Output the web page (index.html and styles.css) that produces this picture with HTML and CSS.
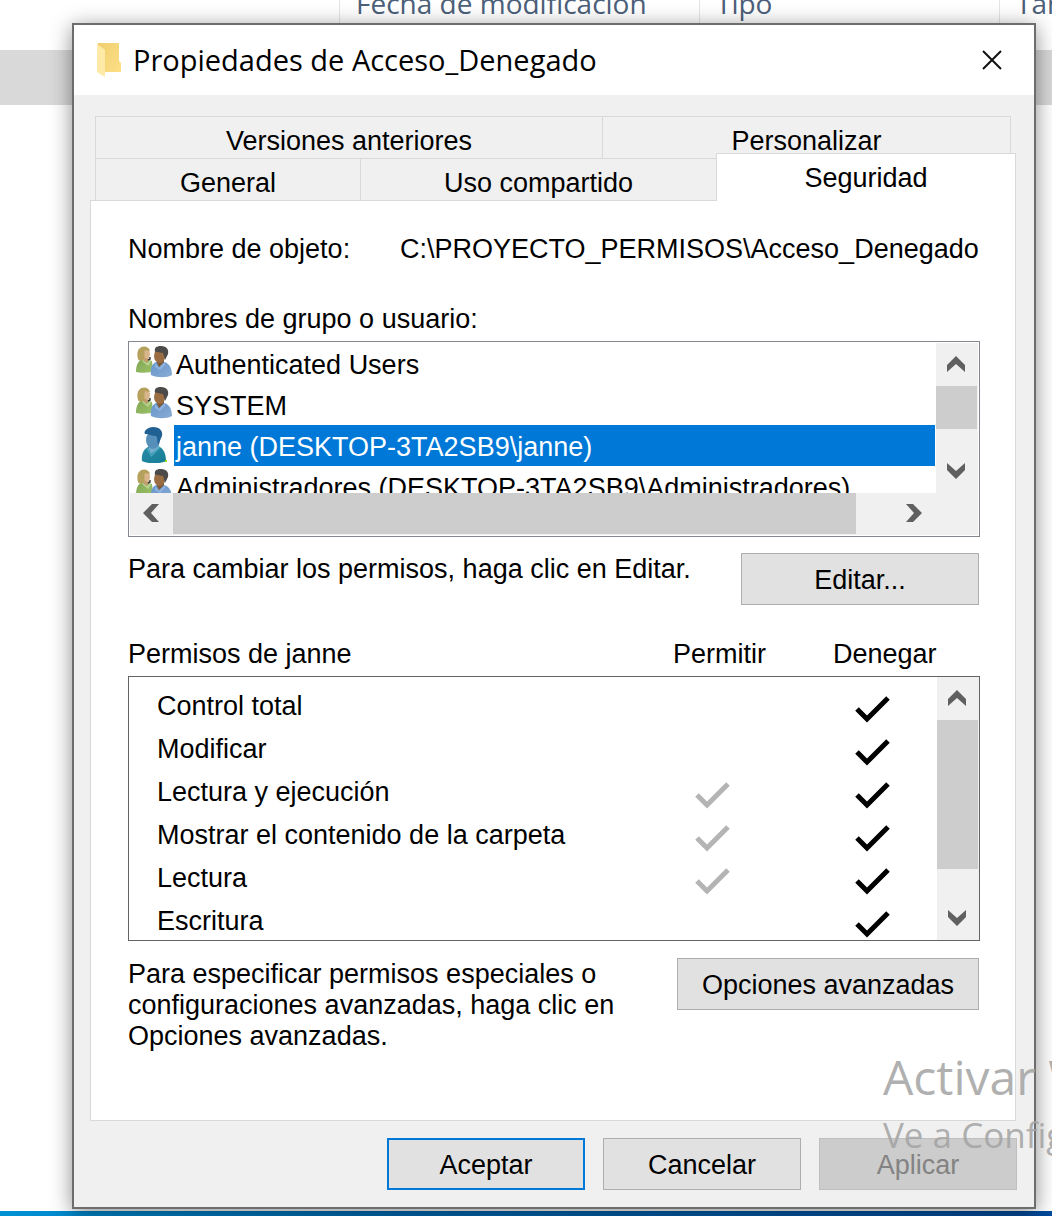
FILE: index.html
```html
<!DOCTYPE html>
<html lang="es">
<head>
<meta charset="utf-8">
<meta name="viewport" content="width=device-width, initial-scale=1">
<title>Propiedades de Acceso_Denegado</title>
<link rel="stylesheet" href="styles.css">
</head>
<body>
<svg width="0" height="0" class="sprites" aria-hidden="true">
  <defs>
    <linearGradient id="green" x1="0" y1="0" x2="1" y2="1"><stop offset="0" stop-color="#7fa452"/><stop offset="1" stop-color="#9cc46a"/></linearGradient>
    <linearGradient id="blue" x1="0" y1="0" x2="1" y2="1"><stop offset="0" stop-color="#6695cb"/><stop offset="1" stop-color="#8aacd4"/></linearGradient>
    <linearGradient id="teal" x1="0" y1="0" x2="1" y2="1"><stop offset="0" stop-color="#2a8ba8"/><stop offset="1" stop-color="#167d95"/></linearGradient>
    <linearGradient id="gold" x1="0" y1="0" x2="1" y2="1"><stop offset="0" stop-color="#efcf70"/><stop offset="1" stop-color="#fddf85"/></linearGradient>
    <symbol id="group" viewBox="0 0 37 32">
      <path d="M1 26C1 20 3 15 6 14c2-1 3-1 4-1l7 2 1 9-2 2c-5 1-11 1-15 0z" fill="url(#green)"/>
      <path d="M7 13l5 4 3-3 1 2-3 4-5-4z" fill="#b9d08f"/>
      <ellipse cx="11" cy="8" rx="4" ry="5.500" fill="#d9b58c"/>
      <path d="M8 11l5 2-1 4-4-3z" fill="#c39b6c"/>
      <path d="M3 13C2 10 2 5 4 3c3-4 10-3 11 2-2 0-4-1-5-1-1 2 0 6-1 9-2 2-5 2-6 0z" fill="#b5a05c"/>
      <path d="M15 11v2l-2 1" fill="none" stroke="#333" stroke-width="1.400"/>
      <path d="M16 29c-1-7 1-11 5-13h8c5 1 8 6 8 13-5 3-15 3-21 0z" fill="url(#blue)"/>
      <path d="M20 17l4 5 6-6v3l-5 5-5-3z" fill="#8fb4e0"/>
      <path d="M22 13h7v3l-5 5-2-4z" fill="#805833"/>
      <ellipse cx="24.500" cy="10" rx="5.500" ry="7" fill="#9a6d42"/>
      <path d="M20 6c-1-4 1-6 6-6 6 0 8 4 7 8l-3 6c-1-3-1-5-2-7-3 0-5-2-8-1z" fill="#4c4b4a"/>
    </symbol>
    <symbol id="person" viewBox="0 0 26 36">
      <path d="M1 34c-1-7 2-12 6-14l10-1c5 2 8 7 8 15-6 3-18 3-24 0z" fill="url(#teal)"/>
      <path d="M7 20l3 8 8-9 1 2-9 9-4-8z" fill="#4aa9c0"/>
      <path d="M8 17h10v3l-8 7-2-5z" fill="#76aed0"/>
      <ellipse cx="12" cy="13" rx="7" ry="9" fill="#5690ba"/>
      <path d="M4 7C2 4 7 0 12 0c7 0 10 4 9 9l-4 9c-1-3 0-7-2-9-4 0-7-2-11-2z" fill="#216093"/>
      <path d="M24 33h2v2h-2z" fill="#8ee000"/>
    </symbol>
    <symbol id="tick" viewBox="0 0 36 28"><path d="M2 14l10 10L33 3" fill="none" stroke="currentColor" stroke-width="5"/></symbol>
    <symbol id="chevron" viewBox="0 0 18 16"><path d="M9 0l9 9v7l-9-8-9 8V9z" fill="#606060"/></symbol>
  </defs>
</svg>

<div class="desktop">
  <div class="explorer">
    <div class="explorer-head">
      <span class="col-name"></span>
      <span class="col-date">Fecha de modificación</span>
      <span class="col-type">Tipo</span>
      <span class="col-size">Tamaño</span>
    </div>
    <div class="explorer-row"></div>
  </div>

  <main class="dialog" role="dialog" aria-labelledby="dialog-title">
    <header class="titlebar">
      <svg class="folder" viewBox="0 0 24 34" aria-hidden="true">
        <path d="M1 0h21v18l2 2v9H1z" fill="url(#gold)"/>
        <path d="M0 1l8 6v27l-8-5z" fill="#ffe9a6"/>
      </svg>
      <h1 id="dialog-title">Propiedades de Acceso_Denegado</h1>
      <button class="close" aria-label="Cerrar">
        <svg viewBox="0 0 20 20"><path d="M1 1l18 18M19 1L1 19" stroke="#111" stroke-width="2"/></svg>
      </button>
    </header>

    <div class="tabs" role="tablist">
      <div class="tab-row tab-row-back">
        <button class="tab tab-versions" role="tab">Versiones anteriores</button>
        <button class="tab tab-custom" role="tab">Personalizar</button>
      </div>
      <div class="tab-row tab-row-front">
        <button class="tab tab-general" role="tab">General</button>
        <button class="tab tab-share" role="tab">Uso compartido</button>
        <button class="tab tab-active" role="tab" aria-selected="true">Seguridad</button>
      </div>
    </div>

    <section class="panel">
      <div class="object-row">
        <label for="object-name">Nombre de objeto:</label>
        <input id="object-name" type="text" readonly value="C:\PROYECTO_PERMISOS\Acceso_Denegado">
      </div>

      <p class="list-label" id="users-label">Nombres de grupo o usuario:</p>
      <div class="user-box">
        <ul class="users" role="listbox" aria-labelledby="users-label">
          <li role="option"><svg class="group"><use href="#group"/></svg><span>Authenticated Users</span></li>
          <li role="option"><svg class="group"><use href="#group"/></svg><span>SYSTEM</span></li>
          <li role="option" aria-selected="true" class="selected"><svg class="person"><use href="#person"/></svg><span>janne (DESKTOP-3TA2SB9\janne)</span></li>
          <li role="option"><svg class="group"><use href="#group"/></svg><span>Administradores (DESKTOP-3TA2SB9\Administradores)</span></li>
        </ul>
        <div class="vbar">
          <button class="arrow" aria-label="Subir"><svg><use href="#chevron"/></svg></button>
          <div class="thumb thumb-users"></div>
          <button class="arrow arrow-end" aria-label="Bajar"><svg class="down"><use href="#chevron"/></svg></button>
        </div>
        <div class="hbar">
          <button class="arrow" aria-label="Izquierda"><svg class="left"><use href="#chevron"/></svg></button>
          <div class="thumb thumb-across"></div>
          <button class="arrow arrow-end" aria-label="Derecha"><svg class="right"><use href="#chevron"/></svg></button>
        </div>
      </div>

      <div class="action-row edit-row">
        <p>Para cambiar los permisos, haga clic en Editar.</p>
        <button class="btn btn-edit">Editar...</button>
      </div>

      <div class="perm-head">
        <span id="perm-label">Permisos de janne</span>
        <span>Permitir</span>
        <span>Denegar</span>
      </div>
      <div class="perm-box">
        <div class="perm-view">
          <table aria-labelledby="perm-label">
            <colgroup><col><col class="col-allow"><col class="col-deny"></colgroup>
            <tbody>
              <tr><th scope="row">Control total</th><td></td><td><svg class="tick"><use href="#tick"/></svg></td></tr>
              <tr><th scope="row">Modificar</th><td></td><td><svg class="tick"><use href="#tick"/></svg></td></tr>
              <tr><th scope="row">Lectura y ejecución</th><td><svg class="tick inherited"><use href="#tick"/></svg></td><td><svg class="tick"><use href="#tick"/></svg></td></tr>
              <tr><th scope="row">Mostrar el contenido de la carpeta</th><td><svg class="tick inherited"><use href="#tick"/></svg></td><td><svg class="tick"><use href="#tick"/></svg></td></tr>
              <tr><th scope="row">Lectura</th><td><svg class="tick inherited"><use href="#tick"/></svg></td><td><svg class="tick"><use href="#tick"/></svg></td></tr>
              <tr><th scope="row">Escritura</th><td></td><td><svg class="tick"><use href="#tick"/></svg></td></tr>
            </tbody>
          </table>
        </div>
        <div class="vbar">
          <button class="arrow" aria-label="Subir"><svg><use href="#chevron"/></svg></button>
          <div class="thumb thumb-perms"></div>
          <button class="arrow arrow-end" aria-label="Bajar"><svg class="down"><use href="#chevron"/></svg></button>
        </div>
      </div>

      <div class="action-row advanced-row">
        <p>Para especificar permisos especiales o configuraciones avanzadas, haga clic en Opciones avanzadas.</p>
        <button class="btn btn-advanced">Opciones avanzadas</button>
      </div>
    </section>

    <footer class="buttons">
      <button class="btn btn-default">Aceptar</button>
      <button class="btn">Cancelar</button>
      <button class="btn" disabled>Aplicar</button>
    </footer>
  </main>

  <div class="taskbar"></div>
  <div class="watermark" aria-hidden="true">
    <p class="watermark-title">Activar Windows</p>
    <p class="watermark-text">Ve a Configuración</p>
  </div>
</div>
</body>
</html>
```
FILE: styles.css
```css
* { box-sizing: border-box; }

body {
  margin: 0;
  background: #fff;
  color: #000;
  font: 27px/31px "Liberation Sans", Arial, sans-serif;
}

h1, p, ul { margin: 0; padding: 0; }
button, input { font: inherit; color: inherit; }
button { margin: 0; padding: 0; border: 0; background: none; }
.sprites { position: absolute; }

/* Desktop behind the dialog */
.desktop {
  position: relative;
  display: flex;
  flex-direction: column;
  min-height: 100vh;
  overflow: hidden;
}

.explorer { position: absolute; inset: 0; }

.explorer-head {
  display: flex;
  height: 50px;
  color: #4c607a;
  font: 28px/6px "Open Sans", "Segoe UI", sans-serif;
  white-space: nowrap;
}

.explorer-head span {
  flex: none;
  padding-left: 16px;
  border-right: 1px solid #e5e5e5;
}

.explorer-head .col-name { width: 340px; }
.explorer-head .col-date { width: 360px; }
.explorer-head .col-type { width: 300px; }
.explorer-head .col-size { border: 0; }
.explorer-row { height: 55px; background: #d9d9d9; }

.taskbar {
  height: 5px;
  margin-top: auto;
  background: linear-gradient(90deg, #0091d5, #006ab0 35%, #00499a);
}

/* Dialog frame */
.dialog {
  position: relative;
  margin: 23px 16px 2px 72px;
  border: 2px solid #6d6d6d;
  background: #f0f0f0;
  box-shadow: 0 4px 20px rgba(0, 0, 0, .45);
}

.titlebar {
  display: flex;
  align-items: center;
  height: 70px;
  padding: 0 32px 0 23px;
  background: #fff;
}

.titlebar h1 {
  flex: 1;
  padding-left: 12px;
  font: 29px/36px "Open Sans", "Segoe UI", sans-serif;
}

.folder { width: 24px; height: 34px; }
.close { display: flex; }
.close svg { width: 20px; height: 20px; }

/* Tabs */
.tabs { padding: 21px 18px 0 21px; }
.tab-row { display: flex; height: 42px; }
.tab-row-back { margin-right: 5px; border-right: 1px solid #d9d9d9; }

.tab {
  border: solid #d9d9d9;
  border-width: 1px 0 0 1px;
  padding-top: 8px;
}

.tab-versions { flex: 507; }
.tab-custom { flex: 408; }
.tab-general { flex: 265; }
.tab-share { flex: 356; }

.tab-active {
  position: relative;
  flex: 299;
  margin: -5px 0 -1px;
  padding-top: 2px;
  border-right-width: 1px;
  background: #fff;
}

/* Security panel */
.panel {
  margin: 0 18px 0 16px;
  padding: 33px 35px 68px 37px;
  border: 1px solid #d9d9d9;
  background: #fff;
}

.object-row { display: flex; }
.object-row label { flex: none; width: 272px; }

.object-row input {
  flex: 1;
  min-width: 0;
  height: 31px;
  padding: 0;
  border: 0;
  background: none;
  outline: 0;
}

.list-label { margin: 39px 0 6px; }

.user-box {
  display: grid;
  grid-template-columns: 1fr 42px;
  grid-template-rows: 150px 42px;
  padding: 1px;
  border: 1px solid #828790;
}

.users {
  min-width: 0;
  padding-right: 1px;
  overflow: hidden;
  list-style: none;
  white-space: nowrap;
}

.users li { display: flex; height: 41px; }
.users svg { flex: none; }
.users .group { width: 37px; height: 32px; margin: 3px 2px 0 5px; }
.users .person { width: 26px; height: 36px; margin: 2px 7px 0 11px; }
.users span { flex: 1; padding: 0 2px; line-height: 45px; }
.users .selected span { background: #0078d7; color: #fff; }
.users .selected { overflow: hidden; }

/* Scroll bars */
.vbar, .hbar { display: flex; background: #f0f0f0; }
.vbar { flex-direction: column; padding-right: 1px; }
.hbar { grid-column: 1 / -1; padding: 0 42px 1px 0; }

.arrow {
  display: flex;
  flex: none;
  align-items: center;
  justify-content: center;
  width: 43px;
  height: 43px;
  padding: 0 2px 2px 0;
}

.vbar .arrow { width: 41px; }
.hbar .arrow { height: 41px; }
.arrow-end { margin-top: auto; }
.hbar .arrow-end { margin: 0 0 0 auto; }
.arrow svg { width: 18px; height: 16px; }
.down { transform: rotate(180deg); }
.left { transform: rotate(-90deg); }
.right { transform: rotate(90deg); }

.thumb { background: #cdcdcd; }
.thumb-users { height: 43px; }
.thumb-across { width: calc(100% - 123px); }
.thumb-perms { height: 149px; }

/* Text with a button at its right */
.action-row {
  display: flex;
  align-items: flex-start;
  justify-content: space-between;
  padding-right: 1px;
}

.edit-row { margin: 16px 0 34px; }
.edit-row p { padding-top: 1px; }
.advanced-row { margin-top: 17px; }
.advanced-row p { width: 500px; padding-top: 1px; }

.btn {
  flex: none;
  width: 198px;
  height: 52px;
  padding-top: 2px;
  border: 1px solid #adadad;
  background: #e1e1e1;
}

.btn-edit { width: 238px; }
.btn-advanced { width: 302px; }
.btn-default { border: 2px solid #0078d7; }
.btn:disabled { border-color: #bfbfbf; background: #ccc; color: #838383; }

/* Permissions */
.perm-head {
  display: grid;
  grid-template-columns: 1fr 160px 147px;
  margin-bottom: 6px;
}

.perm-box {
  display: grid;
  grid-template-columns: 1fr 42px;
  height: 265px;
  border: 1px solid #646464;
}

.perm-view { overflow: hidden; padding-top: 8px; }
.perm-view table { width: 100%; border-collapse: collapse; table-layout: fixed; }
.perm-view tr { height: 43px; }
.perm-view th { padding: 0 0 0 28px; font-weight: normal; text-align: left; }
.perm-view td { padding: 5px 0 0; vertical-align: middle; }
.col-allow { width: 160px; }
.col-deny { width: 82px; }
.tick { display: block; width: 36px; height: 28px; }
.inherited { color: #b4b4b4; }

.buttons {
  display: flex;
  justify-content: flex-end;
  gap: 18px;
  padding: 17px;
}

/* Activation notice drawn over everything */
.watermark {
  position: absolute;
  left: calc(100% - 169px);
  bottom: 56px;
  color: rgba(165, 165, 165, .9);
  font-family: "Open Sans", "Segoe UI", sans-serif;
  white-space: nowrap;
}

.watermark-title { font-size: 48px; line-height: 66px; }
.watermark-text { font-size: 35px; line-height: 50px; }
```
